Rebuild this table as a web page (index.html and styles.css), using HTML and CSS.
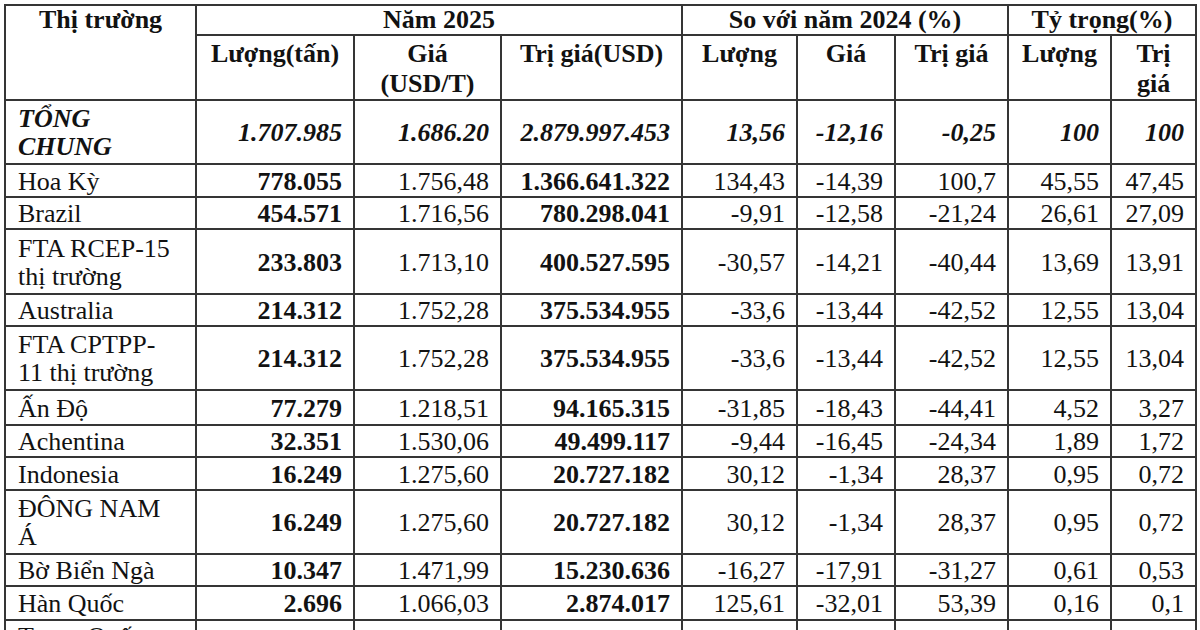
FILE: index.html
```html
<!DOCTYPE html>
<html lang="vi">
<head>
<meta charset="utf-8">
<title>Thị trường</title>
<link rel="stylesheet" href="styles.css">
</head>
<body>
<div class="page">
<table class="tbl">
  <colgroup>
    <col class="c-market">
    <col class="c-qty">
    <col class="c-price">
    <col class="c-val">
    <col class="c-cq">
    <col class="c-cp">
    <col class="c-cv">
    <col class="c-sq">
    <col class="c-sv">
  </colgroup>
  <thead>
    <tr class="h1">
      <th rowspan="2">Thị trường</th>
      <th colspan="3">Năm 2025</th>
      <th colspan="3">So với năm 2024 (%)</th>
      <th colspan="2">Tỷ trọng(%)</th>
    </tr>
    <tr class="h2">
      <th>Lượng(tấn)</th>
      <th>Giá<br>(USD/T)</th>
      <th>Trị giá(USD)</th>
      <th>Lượng</th>
      <th>Giá</th>
      <th>Trị giá</th>
      <th>Lượng</th>
      <th>Trị<br>giá</th>
    </tr>
  </thead>
  <tbody>
    <tr class="dbl total">
      <td class="name">TỔNG<br>CHUNG</td>
      <td>1.707.985</td><td>1.686.20</td><td>2.879.997.453</td>
      <td>13,56</td><td>-12,16</td><td>-0,25</td><td>100</td><td>100</td>
    </tr>
    <tr class="sgl s33">
      <td class="name">Hoa Kỳ</td>
      <td class="b">778.055</td><td>1.756,48</td><td class="b">1.366.641.322</td>
      <td>134,43</td><td>-14,39</td><td>100,7</td><td>45,55</td><td>47,45</td>
    </tr>
    <tr class="sgl">
      <td class="name">Brazil</td>
      <td class="b">454.571</td><td>1.716,56</td><td class="b">780.298.041</td>
      <td>-9,91</td><td>-12,58</td><td>-21,24</td><td>26,61</td><td>27,09</td>
    </tr>
    <tr class="dbl d65">
      <td class="name">FTA RCEP-15<br>thị trường</td>
      <td class="b">233.803</td><td>1.713,10</td><td class="b">400.527.595</td>
      <td>-30,57</td><td>-14,21</td><td>-40,44</td><td>13,69</td><td>13,91</td>
    </tr>
    <tr class="sgl">
      <td class="name">Australia</td>
      <td class="b">214.312</td><td>1.752,28</td><td class="b">375.534.955</td>
      <td>-33,6</td><td>-13,44</td><td>-42,52</td><td>12,55</td><td>13,04</td>
    </tr>
    <tr class="dbl">
      <td class="name">FTA CPTPP-<br>11 thị trường</td>
      <td class="b">214.312</td><td>1.752,28</td><td class="b">375.534.955</td>
      <td>-33,6</td><td>-13,44</td><td>-42,52</td><td>12,55</td><td>13,04</td>
    </tr>
    <tr class="sgl s35">
      <td class="name">Ấn Độ</td>
      <td class="b">77.279</td><td>1.218,51</td><td class="b">94.165.315</td>
      <td>-31,85</td><td>-18,43</td><td>-44,41</td><td>4,52</td><td>3,27</td>
    </tr>
    <tr class="sgl">
      <td class="name">Achentina</td>
      <td class="b">32.351</td><td>1.530,06</td><td class="b">49.499.117</td>
      <td>-9,44</td><td>-16,45</td><td>-24,34</td><td>1,89</td><td>1,72</td>
    </tr>
    <tr class="sgl s33">
      <td class="name">Indonesia</td>
      <td class="b">16.249</td><td>1.275,60</td><td class="b">20.727.182</td>
      <td>30,12</td><td>-1,34</td><td>28,37</td><td>0,95</td><td>0,72</td>
    </tr>
    <tr class="dbl">
      <td class="name">ĐÔNG NAM<br>Á</td>
      <td class="b">16.249</td><td>1.275,60</td><td class="b">20.727.182</td>
      <td>30,12</td><td>-1,34</td><td>28,37</td><td>0,95</td><td>0,72</td>
    </tr>
    <tr class="sgl s31">
      <td class="name">Bờ Biển Ngà</td>
      <td class="b">10.347</td><td>1.471,99</td><td class="b">15.230.636</td>
      <td>-16,27</td><td>-17,91</td><td>-31,27</td><td>0,61</td><td>0,53</td>
    </tr>
    <tr class="sgl s34">
      <td class="name">Hàn Quốc</td>
      <td class="b">2.696</td><td>1.066,03</td><td class="b">2.874.017</td>
      <td>125,61</td><td>-32,01</td><td>53,39</td><td>0,16</td><td>0,1</td>
    </tr>
    <tr class="sgl last">
      <td class="name">Trung Quốc</td>
      <td></td><td></td><td></td><td></td><td></td><td></td><td></td><td></td>
    </tr>
  </tbody>
</table>
</div>
</body>
</html>
```

FILE: styles.css
```css
html, body {
  margin: 0;
  padding: 0;
  background: #ffffff;
}

body {
  overflow: hidden;
  height: 630px;
}

.page {
  padding: 4px 0 0 4px;
}

.tbl {
  border-collapse: collapse;
  table-layout: fixed;
  width: 1193px;
  font-family: "Liberation Serif", "Times New Roman", serif;
  font-size: 26px;
  line-height: 28px;
  color: #121212;
}

.c-market { width: 191px; }
.c-qty    { width: 158px; }
.c-price  { width: 147px; }
.c-val    { width: 181px; }
.c-cq     { width: 115px; }
.c-cp     { width: 98px; }
.c-cv     { width: 113px; }
.c-sq     { width: 103px; }
.c-sv     { width: 85px; }

.tbl th,
.tbl td {
  border: 2px solid #353535;
  padding: 0 10px;
  white-space: nowrap;
  overflow: hidden;
}

.tbl th {
  font-weight: bold;
  text-align: center;
  vertical-align: top;
  padding: 0 2px;
}

.h1 { height: 30px; }
.h1 th { padding-top: 0; }

.h2 { height: 65px; }
.h2 th { padding-top: 3px; line-height: 30px; }

.tbl td {
  text-align: right;
  vertical-align: middle;
  padding: 2px 11px 0 10px;
}

.tbl td.name {
  text-align: left;
  padding-left: 12px;
  padding-right: 2px;
}

.sgl { height: 32px; }
.dbl { height: 64px; }
.s31 { height: 31px; }
.s33 { height: 33px; }
.s34 { height: 34px; }
.s35 { height: 35px; }
.d65 { height: 65px; }

.b { font-weight: bold; }

.total td {
  font-weight: bold;
  font-style: italic;
}

.last td { vertical-align: top; }
```
